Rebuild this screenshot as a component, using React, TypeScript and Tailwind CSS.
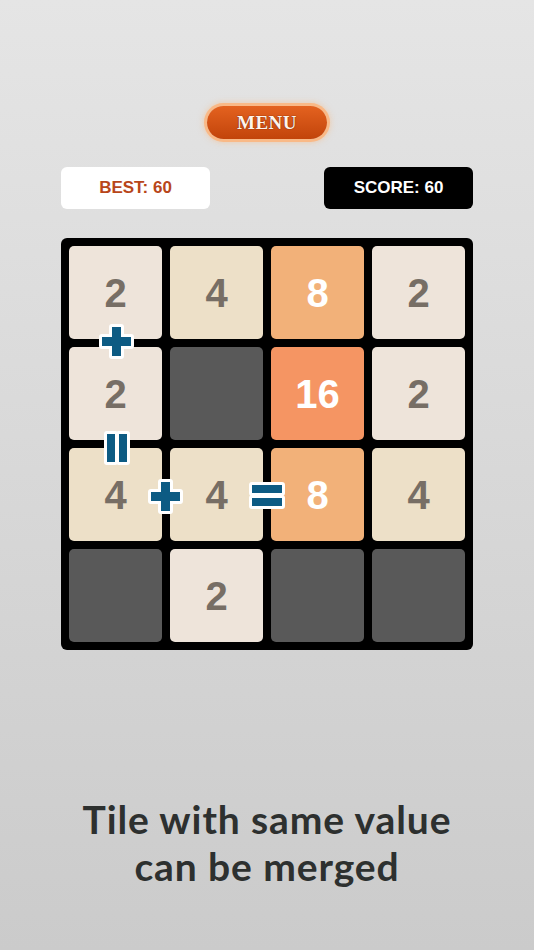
import React from "react";

type Tile = number | null;

const board: Tile[] = [2, 4, 8, 2, 2, null, 16, 2, 4, 4, 8, 4, null, 2, null, null];

const tileStyle: Record<string, string> = {
  "2": "bg-[#eee4da] text-[#776e65]",
  "4": "bg-[#ede0c8] text-[#776e65]",
  "8": "bg-[#f2b179] text-white",
  "16": "bg-[#f59563] text-white",
  empty: "bg-[#595959]",
};

const BLUE = "#0d5b83";

// white outline drawn first, blue shape on top
function Plus() {
  const d = "M13 3h9v10h10v9H22v10h-9V22H3v-9h10z";
  return (
    <svg width="35" height="35" viewBox="0 0 35 35">
      <path d={d} fill="white" stroke="white" strokeWidth="6" strokeLinejoin="round" />
      <path d={d} fill={BLUE} />
    </svg>
  );
}

function Bars() {
  return (
    <svg width="28" height="36" viewBox="0 0 28 36">
      <g fill="white" stroke="white" strokeWidth="6" strokeLinejoin="round">
        <rect x="4" y="4" width="8" height="28" />
        <rect x="16" y="4" width="8" height="28" />
      </g>
      <g fill={BLUE}>
        <rect x="4" y="4" width="8" height="28" />
        <rect x="16" y="4" width="8" height="28" />
      </g>
    </svg>
  );
}

function Equals() {
  return (
    <svg width="38" height="30" viewBox="0 0 38 30">
      <g fill="white" stroke="white" strokeWidth="6" strokeLinejoin="round">
        <rect x="4" y="4" width="30" height="8" />
        <rect x="4" y="17" width="30" height="8" />
      </g>
      <g fill={BLUE}>
        <rect x="4" y="4" width="30" height="8" />
        <rect x="4" y="17" width="30" height="8" />
      </g>
    </svg>
  );
}

export default function App() {
  return (
    <div className="w-[534px] h-[950px] overflow-hidden bg-gradient-to-b from-[#e5e5e5] to-[#cbcbcb] flex flex-col items-center font-['Liberation_Sans',Arial,sans-serif]">
      <button className="mt-[106px] w-[120px] h-[33px] rounded-full bg-gradient-to-b from-[#e4621f] to-[#c2440a] ring-[3px] ring-[#f9b987] shadow-[0_0_6px_3px_rgba(250,180,120,0.55)] flex items-center justify-center">
        <span className="font-['Liberation_Serif',serif] font-bold text-[19px] leading-none tracking-[0.5px] text-[#fff3ea] [text-shadow:0_0_1px_#7a2a04,0_0_1px_#7a2a04]">
          MENU
        </span>
      </button>

      <div className="mt-[28px] w-[412px] flex justify-between">
        <div className="w-[149px] h-[42px] rounded-[6px] bg-white flex items-center justify-center text-[17px] font-bold text-[#b8461a]">
          BEST: 60
        </div>
        <div className="w-[149px] h-[42px] rounded-[6px] bg-black flex items-center justify-center text-[17px] font-bold text-white">
          SCORE: 60
        </div>
      </div>

      <div className="relative mt-[29px] w-[412px] h-[412px] rounded-[6px] bg-black p-[8px] grid grid-cols-4 gap-[8px]">
        {board.map((v, i) => (
          <div
            key={i}
            className={`rounded-[5px] flex items-center justify-center text-[40px] font-bold leading-none ${
              tileStyle[v === null ? "empty" : String(v)]
            }`}
          >
            {v}
          </div>
        ))}
        <div className="absolute left-[38px] top-[86px]">
          <Plus />
        </div>
        <div className="absolute left-[42px] top-[192px]">
          <Bars />
        </div>
        <div className="absolute left-[87px] top-[241px]">
          <Plus />
        </div>
        <div className="absolute left-[187px] top-[243px]">
          <Equals />
        </div>
      </div>

      <div className="mt-[146px] text-center font-['Lato',sans-serif] font-bold text-[39px] tracking-[0.9px] leading-[47px] text-[#2d302f]">
        <div>Tile with same value</div>
        <div>can be merged</div>
      </div>
    </div>
  );
}
